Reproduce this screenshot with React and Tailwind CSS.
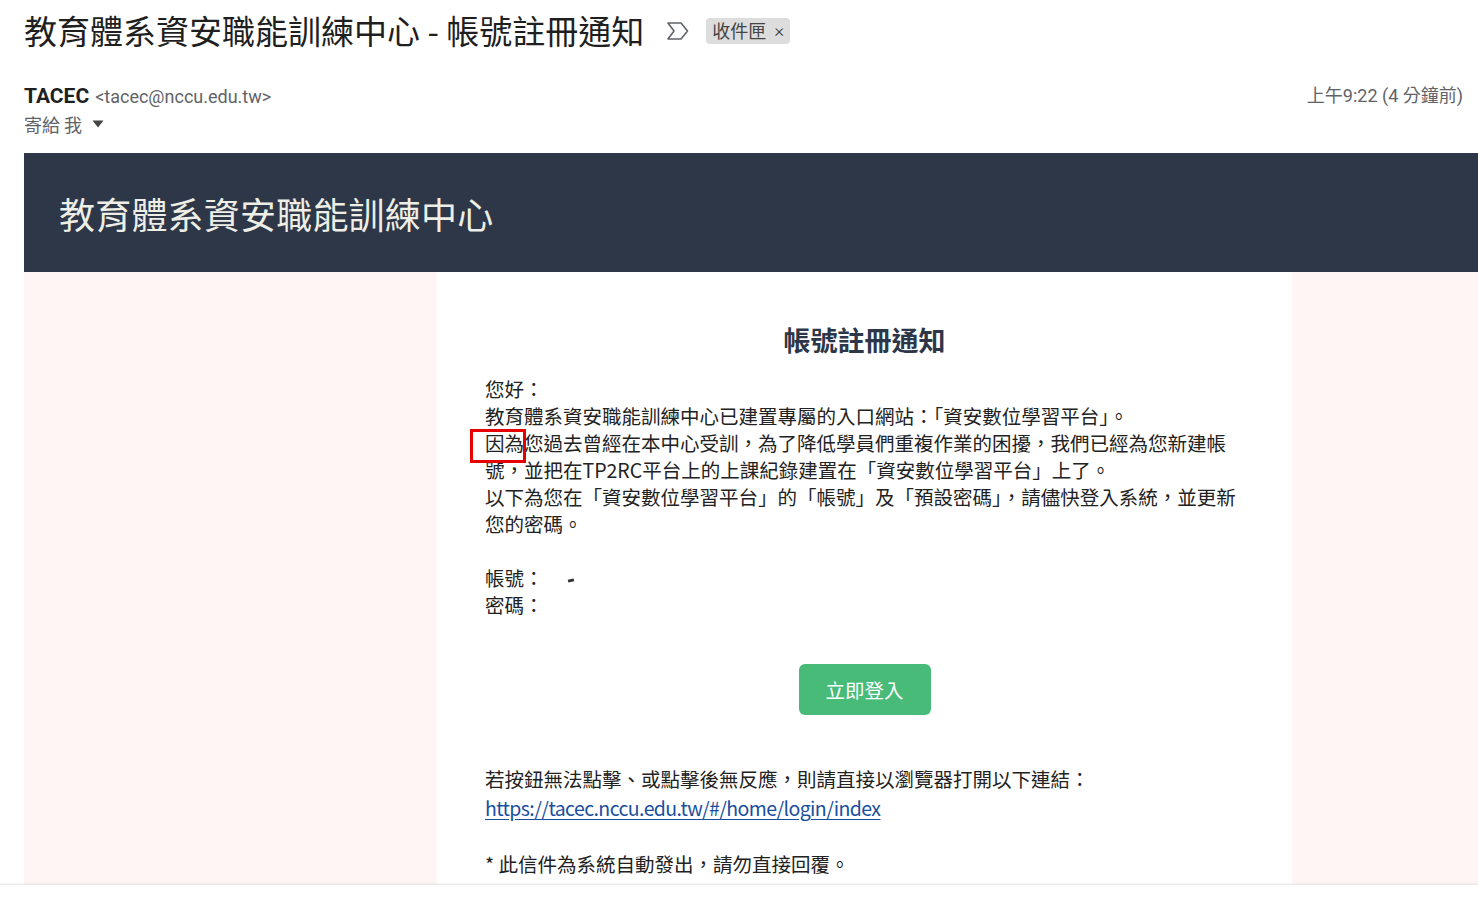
import React from 'react';

const cjk = { fontFamily: '"Noto Sans CJK TC", "Noto Sans", sans-serif' };
const ui = { fontFamily: 'Roboto, "Noto Sans CJK TC", sans-serif' };

function ImportantMarker() {
  return (
    <svg width="24" height="20" viewBox="0 0 24 20" className="shrink-0">
      <path
        d="M2 2 H15 L21.5 10 L15 18 H2 L8 10 Z"
        fill="none"
        stroke="#5f6368"
        strokeWidth="1.6"
        strokeLinejoin="round"
      />
    </svg>
  );
}

function LabelChip({ children }) {
  return (
    <span
      className="inline-flex items-center gap-[8px] h-[26px] px-[6px] rounded-[4px] bg-[#dddddd] text-[18px] text-[#444]"
      style={cjk}
    >
      {children}
      <span className="text-[19px] leading-none font-light text-[#333]" style={ui}>
        ×
      </span>
    </span>
  );
}

function MessageHeader() {
  return (
    <div className="px-[24px]">
      <div className="flex items-center pt-[10px] h-[50px]">
        <h2 className="text-[33px] leading-[40px] text-[#1f1f1f] whitespace-nowrap" style={cjk}>
          教育體系資安職能訓練中心 - 帳號註冊通知
        </h2>
        <div className="ml-[22px] mt-[2px]">
          <ImportantMarker />
        </div>
        <div className="ml-[16px] mt-[2px]">
          <LabelChip>收件匣</LabelChip>
        </div>
      </div>

      <div className="flex items-start justify-between mt-[31px]" style={ui}>
        <div>
          <div className="flex items-baseline gap-[6px] h-[28px]">
            <span className="text-[21px] font-bold text-[#1f1f1f]">TACEC</span>
            <span className="text-[18px] text-[#5f6368]">&lt;tacec@nccu.edu.tw&gt;</span>
          </div>
          <div className="flex items-center gap-[10px] h-[30px] text-[18px] text-[#5f6368]" style={cjk}>
            <span>寄給 我</span>
            <svg width="12" height="8" viewBox="0 0 12 8">
              <path d="M0.5 0.5 H11.5 L6 7.5 Z" fill="#444" />
            </svg>
          </div>
        </div>
        <div className="text-[18px] text-[#5f6368] mr-[-9px] h-[28px] flex items-center" style={ui}>
          上午9:22 (4 分鐘前)
        </div>
      </div>
    </div>
  );
}

function MailBody() {
  return (
    <div className="ml-[24px] mt-[14px]">
      <div className="h-[119px] bg-[#2d3748] flex items-center pl-[35px]">
        <h1 className="text-[36px] text-[#eeeee6] tracking-[0.2px]" style={cjk}>
          教育體系資安職能訓練中心
        </h1>
      </div>

      <div className="bg-[#fff5f5] pl-[413px] h-[612px] overflow-hidden">
        <div className="w-[855px] bg-white h-full px-[48px] pt-[50px] text-[19.5px] leading-[27px] text-[#222]" style={cjk}>
          <h3 className="text-center text-[27px] leading-[36px] font-bold text-[#2d3748]">
            帳號註冊通知
          </h3>

          <div className="mt-[17px] whitespace-nowrap">
            您好：
            <br />
            教育體系資安職能訓練中心已建置專屬的入口網站：「資安數位學習平台」。
            <br />
            <span className="relative">
              因為
              <span className="absolute left-[-15px] right-[-2px] top-[1px] bottom-[-6px] border-[3px] border-[#e60000]" />
            </span>
            您過去曾經在本中心受訓，為了降低學員們重複作業的困擾，我們已經為您新建帳
            <br />
            號，並把在TP2RC平台上的上課紀錄建置在「資安數位學習平台」上了。
            <br />
            以下為您在「資安數位學習平台」的「帳號」及「預設密碼」，請儘快登入系統，並更新
            <br />
            您的密碼。
            <br />
            <br />
            帳號：
            <span className="inline-block w-[6px] h-[3px] bg-[#333] ml-[24px] -rotate-12 align-middle" />
            <br />
            密碼：
          </div>

          <div className="flex justify-center mt-[46px]">
            <a
              href="#"
              className="w-[132px] h-[51px] rounded-[6px] bg-[#48bb78] text-white text-[19.5px] flex items-center justify-center"
            >
              立即登入
            </a>
          </div>

          <div className="mt-[50px] whitespace-nowrap">
            若按鈕無法點擊、或點擊後無反應，則請直接以瀏覽器打開以下連結：
            <br />
            <a
              href="#"
              className="text-[#1a4f9e] underline underline-offset-[3px] leading-[31px] tracking-[-0.6px]"
            >
              https://tacec.nccu.edu.tw/#/home/login/index
            </a>
            <br />
            <br />
            * 此信件為系統自動發出，請勿直接回覆。
          </div>
        </div>
      </div>
    </div>
  );
}

export default function App() {
  return (
    <div className="w-[1478px] h-[901px] bg-white overflow-hidden">
      <div className="h-[884px] overflow-hidden">
        <MessageHeader />
        <MailBody />
      </div>
      <div className="h-[17px] border-t border-[#e8e8ea] shadow-[0_-1px_2px_rgba(0,0,0,0.04)]" />
    </div>
  );
}
